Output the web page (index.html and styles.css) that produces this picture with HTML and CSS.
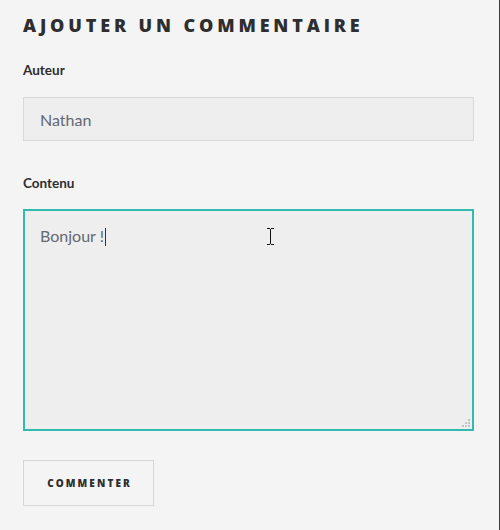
FILE: index.html
```html
<!DOCTYPE html>
<html lang="fr">
<head>
<meta charset="utf-8">
<link rel="stylesheet" href="styles.css">
</head>
<body>
<div class="page">
  <form class="comment-form">
    <h2 class="title">Ajouter un commentaire</h2>
    <div class="field">
      <label class="label">Auteur</label>
      <div class="input">Nathan</div>
    </div>
    <div class="field">
      <label class="label">Contenu</label>
      <div class="textarea">
        <span class="text">Bonjour !</span><span class="caret"></span>
        <svg class="ibeam" width="9" height="17" viewBox="0 0 9 17"><path d="M1 0.5h3M5 0.5h3M1 16.5h3M5 16.5h3M4.5 1v15" stroke="#111" stroke-width="1" fill="none"/></svg>
        <svg class="grip" width="9" height="9" viewBox="0 0 9 9"><g fill="#c4c4c4"><rect x="6" y="0" width="2" height="2"/><rect x="3" y="3" width="2" height="2"/><rect x="6" y="3" width="2" height="2"/><rect x="0" y="6" width="2" height="2"/><rect x="3" y="6" width="2" height="2"/><rect x="6" y="6" width="2" height="2"/></g></svg>
      </div>
    </div>
    <div class="button">Commenter</div>
  </form>
</div>
</body>
</html>
```
FILE: styles.css
```css
html, body {
  margin: 0;
  padding: 0;
  background: #f4f4f4;
}
.page {
  width: 500px;
  height: 530px;
  box-sizing: border-box;
  border-right: 1px solid #3a3a3a;
  padding: 13px 25px 0 23px;
  font-family: "Open Sans", "Liberation Sans", sans-serif;
  color: #333;
}
.comment-form {
  display: flex;
  flex-direction: column;
}
.title {
  margin: 0;
  font-family: "Open Sans", sans-serif;
  font-weight: 800;
  font-size: 18px;
  line-height: 24px;
  letter-spacing: 3.85px;
  text-transform: uppercase;
  color: #2e2e2e;
}
.field {
  display: flex;
  flex-direction: column;
}
.label {
  font-family: "Lato", sans-serif;
  font-weight: 700;
  font-size: 13.5px;
  line-height: 16px;
  color: #2e2e2e;
  margin-top: 25px;
  margin-bottom: 19px;
}
.field + .field .label {
  margin-top: 34px;
  margin-bottom: 18px;
}
.input {
  height: 44px;
  box-sizing: border-box;
  border: 1px solid #d9d9d9;
  background: #eeeeee;
  padding: 0 16px;
  display: flex;
  align-items: center;
  font-family: "Lato", sans-serif;
  font-size: 16px;
  color: #636870;
}
.textarea {
  position: relative;
  height: 222px;
  box-sizing: border-box;
  border: 2px solid #2fbbb0;
  background: #eeeeee;
  padding: 13px 15px;
  font-family: "Lato", sans-serif;
  font-size: 16px;
  line-height: 24px;
  color: #636870;
  display: flex;
  align-items: flex-start;
}
.caret {
  display: inline-block;
  width: 1px;
  height: 18px;
  background: #333;
  margin-top: 4px;
  margin-left: 1px;
}
.ibeam {
  position: absolute;
  left: 241px;
  top: 17px;
}
.grip {
  position: absolute;
  right: 1px;
  bottom: 1px;
}
.button {
  align-self: flex-start;
  margin-top: 29px;
  width: 131px;
  height: 46px;
  box-sizing: border-box;
  border: 1px solid #d6d6d6;
  display: flex;
  align-items: center;
  justify-content: center;
  font-family: "Open Sans", sans-serif;
  font-weight: 800;
  font-size: 10px;
  letter-spacing: 2.1px;
  text-transform: uppercase;
  color: #2e2e2e;
  padding-left: 2px;
}
```
